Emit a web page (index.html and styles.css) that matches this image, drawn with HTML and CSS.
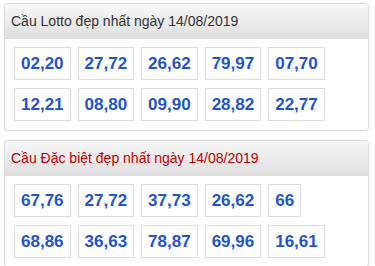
FILE: index.html
```html
<!DOCTYPE html>
<html lang="vi">
<head>
<meta charset="utf-8">
<link rel="stylesheet" href="styles.css">
</head>
<body>
<div class="page">
  <section class="card">
    <div class="card-head">Cầu Lotto đẹp nhất ngày 14/08/2019</div>
    <div class="card-body">
      <div class="row"><span class="num">02,20</span><span class="num">27,72</span><span class="num">26,62</span><span class="num">79,97</span><span class="num">07,70</span></div>
      <div class="row"><span class="num">12,21</span><span class="num">08,80</span><span class="num">09,90</span><span class="num">28,82</span><span class="num">22,77</span></div>
    </div>
  </section>
  <section class="card">
    <div class="card-head red">Cầu Đặc biệt đẹp nhất ngày 14/08/2019</div>
    <div class="card-body">
      <div class="row"><span class="num">67,76</span><span class="num">27,72</span><span class="num">37,73</span><span class="num">26,62</span><span class="num">66</span></div>
      <div class="row"><span class="num">68,86</span><span class="num">36,63</span><span class="num">78,87</span><span class="num">69,96</span><span class="num">16,61</span></div>
    </div>
  </section>
</div>
</body>
</html>
```
FILE: styles.css
```css
html, body {
  margin: 0;
  padding: 0;
  background: #fff;
}
body {
  font-family: "Liberation Sans", Arial, sans-serif;
}
.page {
  padding: 3px 6px 0 4px;
  display: flex;
  flex-direction: column;
  gap: 9px;
}
.card {
  border: 1px solid #dcdcdc;
  border-radius: 4px;
  box-shadow: 0 0 3px rgba(0,0,0,0.08);
  overflow: hidden;
}
.card-head {
  height: 34px;
  line-height: 34px;
  padding-left: 6px;
  font-size: 14px;
  color: #333;
  background: linear-gradient(to bottom, #f8f8f8 0%, #dfdfdf 100%);
  border-bottom: 1px solid #dcdcdc;
}
.card-head.red {
  color: #c00000;
}
.card-body {
  padding: 8px 9px 9px 9px;
  display: flex;
  flex-direction: column;
  gap: 8px;
}
.row {
  display: flex;
  gap: 7px;
}
.num {
  display: block;
  border: 1px solid #dcdcdc;
  padding: 0 6px;
  height: 31px;
  line-height: 31px;
  font-size: 17px;
  font-weight: bold;
  color: #2354cb;
}
```
